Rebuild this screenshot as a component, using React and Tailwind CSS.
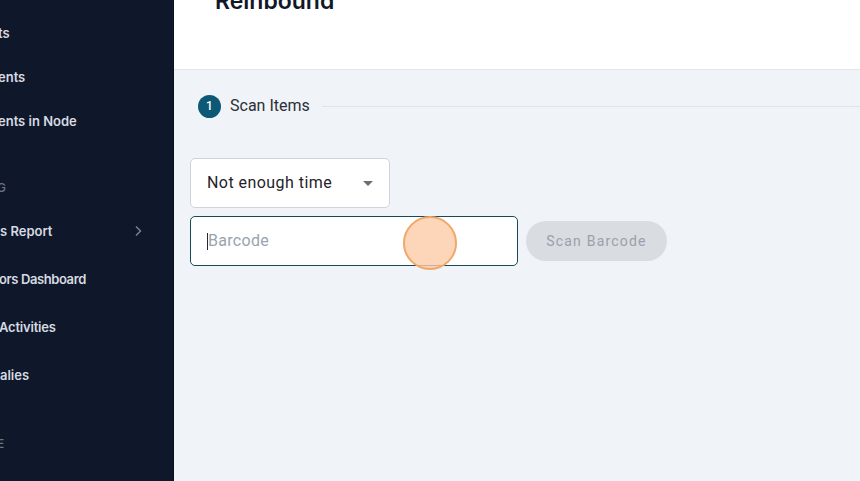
import React from 'react';

const navItems = [
	{ label: 'ts', top: 'mt-[24px]' },
	{ label: 'ents', top: 'mt-[26px]' },
	{ label: 'ents in Node', top: 'mt-[26px]' },
];

const reportItems = [
	{ label: 's Report', chevron: true, shift: 'ml-0' },
	{ label: 'ors Dashboard', shift: '-ml-[1px] tracking-[-0.4px]' },
	{ label: 'Activities', shift: '-ml-[1px] tracking-[-0.2px]' },
	{ label: 'alies', shift: 'ml-0' },
];

const Sidebar = () => (
	<aside className="w-[174px] shrink-0 h-full bg-[#0f172a] border-r border-[#0a1020] overflow-hidden font-['Inter',sans-serif] text-[13px] font-semibold text-[#d6dae1]">
		{navItems.map((item) => (
			<div key={item.label} className={`${item.top} h-[18px] leading-[18px] -ml-[2px] whitespace-pre`}>
				{item.label}
			</div>
		))}
		<div className="mt-[49px] h-[18px] leading-[18px] -ml-[3px] text-[12px] font-medium text-[#6b7280]">G</div>
		{reportItems.map((item, i) => (
			<div
				key={item.label}
				className={`${i === 0 ? 'mt-[25px]' : 'mt-[30px]'} h-[18px] leading-[18px] whitespace-pre flex items-center pr-[30px]`}
			>
				<span className={`flex-1 ${item.shift}`}>{item.label}</span>
				{item.chevron && (
					<svg width="10" height="12" viewBox="0 0 10 12" fill="none" stroke="#7d8594" strokeWidth="1.4">
						<path d="M3 1.5 L7.5 6 L3 10.5" />
					</svg>
				)}
			</div>
		))}
		<div className="mt-[51px] h-[18px] leading-[18px] -ml-[3px] text-[12px] font-medium text-[#6b7280]">E</div>
	</aside>
);

const App = () => {
	return (
		<div className="w-[860px] h-[481px] flex overflow-hidden bg-[#f0f3f8]">
			<Sidebar />
			<main className="flex-1 flex flex-col">
				<header className="h-[70px] shrink-0 bg-white border-b border-[#e2e6ec] overflow-hidden">
					<h1 className="ml-[41px] -mt-[14px] text-[23px] font-semibold leading-[30px] text-[#111827] font-['Inter',sans-serif]">
						Reinbound
					</h1>
				</header>
				<section className="flex-1 pl-[16px] font-['Roboto',sans-serif]">
					<div className="mt-[24px] flex items-center h-[24px]">
						<div className="ml-[8px] w-[23px] h-[23px] rounded-full bg-[#0d5874] text-white text-[12px] font-medium flex items-center justify-center">
							1
						</div>
						<span className="ml-[9px] text-[16px] text-[#2a2f36]">Scan Items</span>
						<div className="ml-[12px] flex-1 h-px bg-[#dfe3ea]" />
					</div>
					<div className="mt-[40px] w-[200px] h-[50px] bg-white border border-[#cfd4dc] rounded-[5px] flex items-center pl-[16px] pr-[16px]">
						<span className="flex-1 text-[16px] tracking-[0.45px] text-[#1f2328]">Not enough time</span>
						<svg width="10" height="5" viewBox="0 0 10 5">
							<path d="M0 0 L10 0 L5 5 Z" fill="#6b6f75" />
						</svg>
					</div>
					<div className="mt-[8px] flex items-center gap-[8px]">
						<div className="relative w-[328px] h-[50px] bg-white border border-[#164b5c] rounded-[5px] flex items-center pl-[16px]">
							<span className="w-px h-[17px] bg-[#1f2937]" />
							<span className="text-[16px] tracking-[0.3px] text-[#9aa3b0]">Barcode</span>
							<div className="absolute left-[212px] top-[-1px] w-[54px] h-[54px] rounded-full bg-[#fccba6]/80 border-2 border-[#f0a868]" />
						</div>
						<button className="w-[141px] h-[40px] rounded-full bg-[#d9dce1] text-[14px] tracking-[1.2px] text-[#9aa1ac]">
							Scan Barcode
						</button>
					</div>
				</section>
			</main>
		</div>
	);
};

export default App;
